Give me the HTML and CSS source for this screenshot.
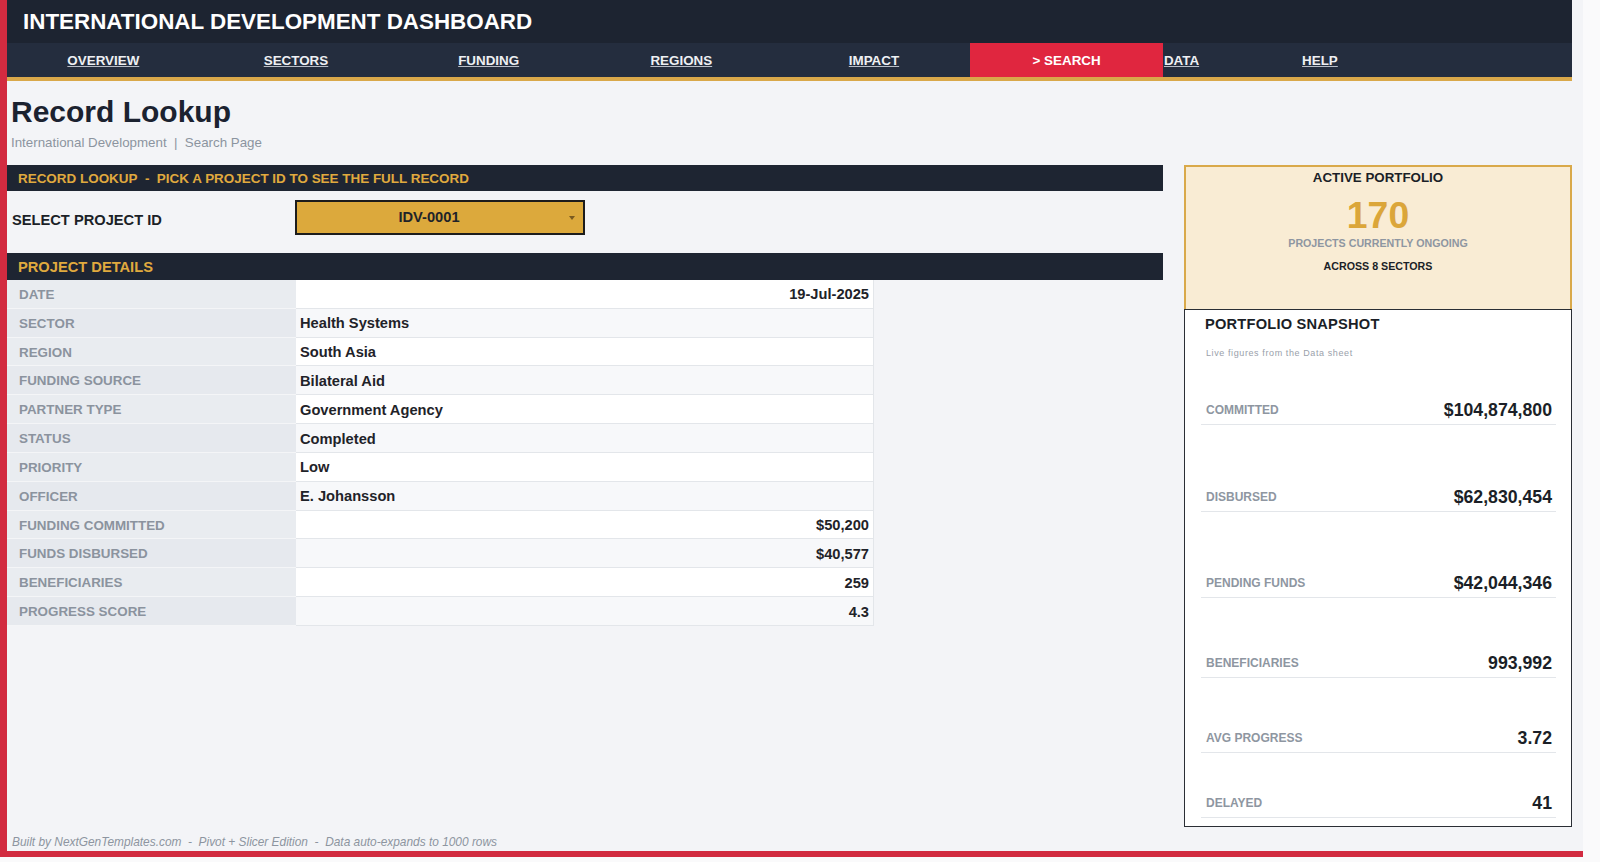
FILE: index.html
```html
<!DOCTYPE html>
<html lang="en">
<head>
  <meta charset="UTF-8">
  <meta name="viewport" content="width=device-width, initial-scale=1">
  <title>Record Lookup - International Development Dashboard</title>
  <link rel="stylesheet" href="styles.css">
</head>
<body>
  <div class="sheet">
    <!-- Dashboard title -->
    <header class="topbar">
      <h1>INTERNATIONAL DEVELOPMENT DASHBOARD</h1>
    </header>

    <!-- Sheet navigation -->
    <nav class="tabs">
      <a href="#">OVERVIEW</a>
      <a href="#">SECTORS</a>
      <a href="#">FUNDING</a>
      <a href="#">REGIONS</a>
      <a href="#">IMPACT</a>
      <a href="#" class="active">&gt; SEARCH</a>
      <a href="#" class="tab-left">DATA</a>
      <a href="#">HELP</a>
    </nav>

    <div class="page-head">
      <h2>Record Lookup</h2>
      <p>International Development&nbsp; |&nbsp; Search Page</p>
    </div>

    <div class="content">
      <main class="lookup">
        <div class="section-bar slim">RECORD LOOKUP&nbsp; -&nbsp; PICK A PROJECT ID TO SEE THE FULL RECORD</div>

        <div class="select-row">
          <label for="project-id">SELECT PROJECT ID</label>
          <div class="dropdown" id="project-id">
            <span>IDV-0001</span>
            <i class="caret"></i>
          </div>
        </div>

        <div class="section-bar">PROJECT DETAILS</div>

        <div class="details">
          <div class="row"><span class="key">DATE</span><span class="val num">19-Jul-2025</span></div>
          <div class="row"><span class="key">SECTOR</span><span class="val">Health Systems</span></div>
          <div class="row"><span class="key">REGION</span><span class="val">South Asia</span></div>
          <div class="row"><span class="key">FUNDING SOURCE</span><span class="val">Bilateral Aid</span></div>
          <div class="row"><span class="key">PARTNER TYPE</span><span class="val">Government Agency</span></div>
          <div class="row"><span class="key">STATUS</span><span class="val">Completed</span></div>
          <div class="row"><span class="key">PRIORITY</span><span class="val">Low</span></div>
          <div class="row"><span class="key">OFFICER</span><span class="val">E. Johansson</span></div>
          <div class="row"><span class="key">FUNDING COMMITTED</span><span class="val num">$50,200</span></div>
          <div class="row"><span class="key">FUNDS DISBURSED</span><span class="val num">$40,577</span></div>
          <div class="row"><span class="key">BENEFICIARIES</span><span class="val num">259</span></div>
          <div class="row"><span class="key">PROGRESS SCORE</span><span class="val num">4.3</span></div>
        </div>
      </main>

      <aside class="side">
        <div class="active-card">
          <div class="active-title">ACTIVE PORTFOLIO</div>
          <div class="active-count">170</div>
          <div class="active-sub">PROJECTS CURRENTLY ONGOING</div>
          <div class="active-note">ACROSS 8 SECTORS</div>
        </div>

        <div class="snapshot">
          <h3>PORTFOLIO SNAPSHOT</h3>
          <p class="snap-sub">Live figures from the Data sheet</p>
          <div class="snap-row"><span class="snap-label">COMMITTED</span><span class="snap-value">$104,874,800</span></div>
          <div class="snap-row"><span class="snap-label">DISBURSED</span><span class="snap-value">$62,830,454</span></div>
          <div class="snap-row"><span class="snap-label">PENDING FUNDS</span><span class="snap-value">$42,044,346</span></div>
          <div class="snap-row"><span class="snap-label">BENEFICIARIES</span><span class="snap-value">993,992</span></div>
          <div class="snap-row"><span class="snap-label">AVG PROGRESS</span><span class="snap-value">3.72</span></div>
          <div class="snap-row"><span class="snap-label">DELAYED</span><span class="snap-value">41</span></div>
        </div>
      </aside>
    </div>

    <footer class="credits">Built by NextGenTemplates.com&nbsp; -&nbsp; Pivot + Slicer Edition&nbsp; -&nbsp; Data auto-expands to 1000 rows</footer>
  </div>
</body>
</html>
```

FILE: styles.css
```css
/* Reset and base styles */
* {
  margin: 0;
  padding: 0;
  box-sizing: border-box;
}
body {
  background: #fafafb;
  font-family: "Liberation Sans", Arial, sans-serif;
  color: #1f2329;
}
/* Sheet frame with the red edge on the left and bottom */
.sheet {
  width: 1583px;
  height: 857px;
  background: #f3f4f7;
  border-left: 7px solid #d22b40;
  border-bottom: 6px solid #d22b40;
  display: flex;
  flex-direction: column;
}
/* Title bar */
.topbar {
  width: 1565px;
  height: 43px;
  background: #1d2431;
  display: flex;
  align-items: center;
  padding-left: 16px;
}
.topbar h1 {
  color: #fff;
  font-size: 22.4px;
  font-weight: bold;
}
/* Navigation tabs */
.tabs {
  width: 1565px;
  height: 38px;
  background: #242d3e;
  border-bottom: 4px solid #d9a84a;
  display: grid;
  grid-template-columns: repeat(6, 192.67px) 117px 80px;
}
.tabs a {
  display: flex;
  align-items: center;
  justify-content: center;
  color: #eef0f3;
  font-size: 13.4px;
  font-weight: bold;
  text-decoration: underline;
  text-decoration-color: #b9bec7;
}
.tabs a.active {
  background: #e0263f;
  color: #fff;
  text-decoration: none;
}
.tabs a.tab-left {
  justify-content: flex-start;
  padding-left: 1px;
}
/* Page heading */
.page-head {
  height: 84px;
  padding: 14px 0 0 4px;
}
.page-head h2 {
  font-size: 30px;
  line-height: 34.5px;
  font-weight: bold;
  color: #1b2230;
}
.page-head p {
  margin-top: 5.5px;
  font-size: 13.33px;
  line-height: 16px;
  color: #8c949f;
}
/* Two column content */
.content {
  display: flex;
  gap: 21px;
}
.lookup {
  width: 1156px;
}
.side {
  width: 388px;
}
/* Dark section bars */
.section-bar {
  height: 27px;
  background: #1e2532;
  color: #e0aa3e;
  font-size: 14.67px;
  font-weight: bold;
  display: flex;
  align-items: center;
  padding-left: 11px;
}
.section-bar.slim {
  height: 26px;
  font-size: 13.45px;
}
/* Project id picker */
.select-row {
  height: 62px;
  display: flex;
  align-items: flex-start;
  padding-top: 9px;
}
.select-row label {
  width: 288px;
  padding: 3px 0 0 5px;
  font-size: 14.67px;
  line-height: 35px;
  font-weight: bold;
  color: #1b1f27;
}
.dropdown {
  width: 290px;
  height: 35px;
  background: #dca93c;
  border: 2px solid #1c1c1c;
  display: flex;
  align-items: center;
}
.dropdown span {
  flex: 1;
  text-align: center;
  padding: 0 8px 2px 0;
  font-size: 14.67px;
  font-weight: bold;
  color: #1f2329;
}
.caret {
  width: 0;
  height: 0;
  margin-right: 8px;
  border-left: 3.5px solid transparent;
  border-right: 3.5px solid transparent;
  border-top: 4px solid #7a5a20;
}
/* Record detail table */
.details {
  width: 867px;
}
.row {
  display: grid;
  grid-template-columns: 289px 578px;
  height: 28.83px;
}
.key {
  display: flex;
  align-items: center;
  padding: 1px 0 0 12px;
  background: #e9ecf0;
  border-bottom: 1px solid #f4f5f7;
  color: #8b939e;
  font-size: 13.4px;
  font-weight: bold;
}
.val {
  display: flex;
  align-items: center;
  padding: 1px 4px 0 4px;
  background: #fff;
  border-bottom: 1px solid #e3e6ea;
  border-right: 1px solid #e3e6ea;
  font-size: 14.67px;
  font-weight: bold;
  color: #1f2329;
}
.row:nth-child(even) .val {
  background: #f7f8fa;
}
.row:nth-child(even) .key {
  background: #e6e9ee;
}
.val.num {
  justify-content: flex-end;
}
/* Active portfolio card */
.active-card {
  height: 144px;
  background: #f9ecd4;
  border: 2px solid #d9a94a;
  border-bottom: none;
  text-align: center;
  padding-top: 3px;
}
.active-title {
  font-size: 13.33px;
  line-height: 16px;
  font-weight: bold;
  color: #1b1f27;
}
.active-count {
  margin-top: 8.5px;
  font-size: 37.33px;
  line-height: 40px;
  font-weight: bold;
  color: #dba63a;
}
.active-sub {
  margin-top: 1px;
  font-size: 10.67px;
  line-height: 14px;
  font-weight: bold;
  color: #8e96a1;
}
.active-note {
  margin-top: 9px;
  font-size: 10.67px;
  line-height: 14px;
  font-weight: bold;
  color: #1b1f27;
}
/* Portfolio snapshot card */
.snapshot {
  height: 518px;
  background: #fff;
  border: 1px solid #2a2e35;
  padding-top: 4.5px;
}
.snapshot h3 {
  padding-left: 20px;
  font-size: 14.67px;
  line-height: 18px;
  font-weight: bold;
  color: #1b1f27;
  letter-spacing: 0.2px;
}
.snap-sub {
  margin-top: 14.5px;
  padding-left: 21px;
  font-size: 9px;
  line-height: 12px;
  letter-spacing: 0.6px;
  color: #9aa1ab;
}
.snap-row {
  display: flex;
  justify-content: space-between;
  align-items: flex-end;
  margin: 0 15px 0 16px;
  padding: 0 4px 4px 5px;
  border-bottom: 1px solid #e3e6ea;
  line-height: 20px;
}
.snap-row:nth-of-type(1) { height: 66px; }
.snap-row:nth-of-type(2) { height: 87px; }
.snap-row:nth-of-type(3) { height: 86px; }
.snap-row:nth-of-type(4) { height: 80px; }
.snap-row:nth-of-type(5) { height: 75px; }
.snap-row:nth-of-type(6) { height: 65px; }
.snap-label {
  font-size: 12px;
  font-weight: bold;
  color: #8e96a1;
}
.snap-value {
  font-size: 17.7px;
  font-weight: bold;
  color: #1b1f27;
}
/* Footer credit line */
.credits {
  margin-top: auto;
  padding: 0 0 2px 5px;
  font-size: 11.9px;
  line-height: 14px;
  font-style: italic;
  color: #8d95a0;
}
```
